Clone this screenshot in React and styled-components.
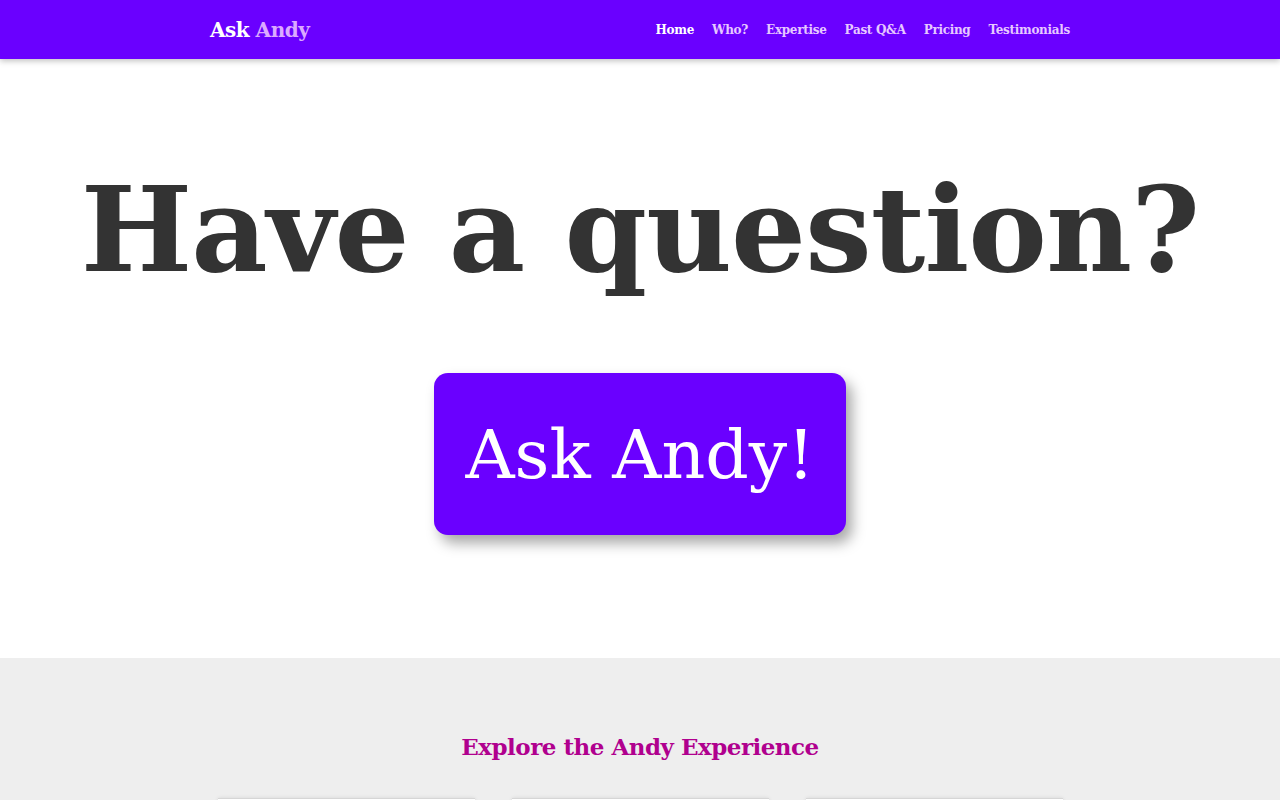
import styled, { createGlobalStyle } from "styled-components";

const GlobalStyle = createGlobalStyle`
  body {
    margin: 0;
    background: #ffffff;
    font-family: "DejaVu Serif", "Liberation Serif", serif;
  }
`;

const links = ["Home", "Who?", "Expertise", "Past Q&A", "Pricing", "Testimonials"];

const App = () => {
  return (
    <>
      <GlobalStyle />
      <Header>
        <HeaderInner>
          <Logo>
            Ask <LogoAccent>Andy</LogoAccent>
          </Logo>
          <Nav>
            {links.map((link, i) => (
              <NavLink key={link} $active={i === 0}>
                {link}
              </NavLink>
            ))}
          </Nav>
        </HeaderInner>
      </Header>
      <Hero>
        <Headline>Have a question?</Headline>
        <AskButton>Ask Andy!</AskButton>
      </Hero>
      <Explore>
        <ExploreTitle>Explore the Andy Experience</ExploreTitle>
        <Cards>
          <Card />
          <Card />
          <Card />
        </Cards>
      </Explore>
    </>
  );
};

const Header = styled.header`
  height: 59px;
  background: #6a00ff;
  box-shadow: 0 2px 6px rgba(0, 0, 0, 0.25);
  position: relative;
  z-index: 2;
`;

const HeaderInner = styled.div`
  width: 860px;
  height: 100%;
  margin: 0 auto;
  display: flex;
  align-items: center;
  justify-content: space-between;
`;

const Logo = styled.div`
  color: #ffffff;
  font-weight: bold;
  font-size: 20px;
  letter-spacing: -0.5px;
`;

const LogoAccent = styled.span`
  color: #dcaaff;
`;

const Nav = styled.nav`
  display: flex;
  gap: 18px;
`;

const NavLink = styled.a`
  color: ${(p) => (p.$active ? "#ffffff" : "#e6c8ff")};
  font-size: 12px;
  font-weight: bold;
  letter-spacing: -0.3px;
  cursor: pointer;
`;

const Hero = styled.section`
  height: 599px;
  display: flex;
  flex-direction: column;
  align-items: center;
  padding-top: 96px;
  box-sizing: border-box;
`;

const Headline = styled.h1`
  margin: 0;
  color: #333333;
  font-size: 118px;
  font-weight: bold;
  line-height: 150px;
  letter-spacing: -0.9px;
  white-space: nowrap;
`;

const AskButton = styled.button`
  margin-top: 68px;
  width: 412px;
  height: 162px;
  border: none;
  border-radius: 14px;
  background: #6a00ff;
  color: #ffffff;
  font-family: "DejaVu Serif", "Liberation Serif", serif;
  font-size: 68px;
  padding: 0;
  box-shadow: 6px 8px 14px rgba(0, 0, 0, 0.35);
  cursor: pointer;
`;

const Explore = styled.section`
  background: #eeeeee;
  padding-top: 76px;
  height: 400px;
  box-sizing: border-box;
`;

const ExploreTitle = styled.h2`
  margin: 0;
  text-align: center;
  color: #b0008e;
  font-size: 23px;
  font-weight: bold;
  line-height: 26px;
  letter-spacing: -0.5px;
`;

const Cards = styled.div`
  width: 845px;
  margin: 38px auto 0;
  display: grid;
  grid-template-columns: repeat(3, 1fr);
  gap: 37px;
`;

const Card = styled.div`
  height: 300px;
  background: #ffffff;
  border-top: 1px solid #d6d6d6;
  box-shadow: 0 0 4px rgba(0, 0, 0, 0.1);
`;

export default App;
